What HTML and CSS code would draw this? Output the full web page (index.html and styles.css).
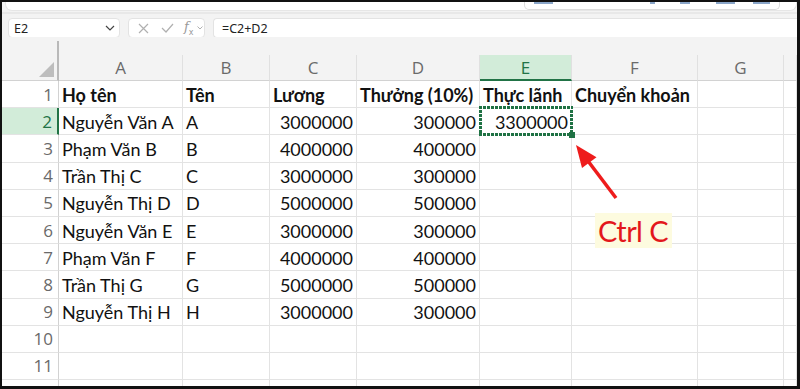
FILE: index.html
```html
<!DOCTYPE html>
<html lang="vi">
<head>
<meta charset="utf-8">
<title>Excel - Ctrl C</title>
<link rel="stylesheet" href="styles.css">
</head>
<body>
<div class="frame">
  <div class="ribbon">
    <div class="ribbon-box">
      <div class="ribbon-group">
        <span class="blue b1"></span><span class="blue b2"></span><span class="blue b3"></span><span class="blue b4"></span><span class="blue b5"></span>
      </div>
    </div>
  </div>
  <div class="fbar">
    <div class="namebox">
      <span>E2</span>
      <svg class="chev" width="10" height="6" viewBox="0 0 10 6"><path d="M1 1 L5 5 L9 1" fill="none" stroke="#444" stroke-width="1.2"/></svg>
    </div>
    <div class="fnbox">
      <svg width="11" height="11" viewBox="0 0 11 11"><path d="M1 1 L10 10 M10 1 L1 10" stroke="#b0b0b0" stroke-width="1.2"/></svg>
      <svg width="13" height="10" viewBox="0 0 13 10"><path d="M1 5 L5 9 L12 1" fill="none" stroke="#b0b0b0" stroke-width="1.2"/></svg>
      <span class="fx"><i>f</i><sub>x</sub></span>
      <svg class="mini" width="6" height="4" viewBox="0 0 6 4"><path d="M0.5 0.5 L3 3 L5.5 0.5" fill="none" stroke="#b0b0b0" stroke-width="1"/></svg>
    </div>
    <div class="formula">=C2+D2</div>
  </div>
  <div class="sheet">
    <div class="colhead">
      <div class="corner"><span class="tri"></span></div>
      <div class="ch">A</div>
      <div class="ch">B</div>
      <div class="ch">C</div>
      <div class="ch">D</div>
      <div class="ch active">E</div>
      <div class="ch">F</div>
      <div class="ch">G</div>
      <div class="ch"></div>
    </div>
    <div class="grid">
      <div class="rh">1</div><div class="c b">Họ tên</div><div class="c b">Tên</div><div class="c b">Lương</div><div class="c b">Thưởng (10%)</div><div class="c b">Thực lãnh</div><div class="c b">Chuyển khoản</div><div class="c"></div><div class="c"></div>
      <div class="rh active">2</div><div class="c">Nguyễn Văn A</div><div class="c">A</div><div class="c n">3000000</div><div class="c n">300000</div><div class="c n sel">3300000</div><div class="c"></div><div class="c"></div><div class="c"></div>
      <div class="rh">3</div><div class="c">Phạm Văn B</div><div class="c">B</div><div class="c n">4000000</div><div class="c n">400000</div><div class="c"></div><div class="c"></div><div class="c"></div><div class="c"></div>
      <div class="rh">4</div><div class="c">Trần Thị C</div><div class="c">C</div><div class="c n">3000000</div><div class="c n">300000</div><div class="c"></div><div class="c"></div><div class="c"></div><div class="c"></div>
      <div class="rh">5</div><div class="c">Nguyễn Thị D</div><div class="c">D</div><div class="c n">5000000</div><div class="c n">500000</div><div class="c"></div><div class="c"></div><div class="c"></div><div class="c"></div>
      <div class="rh">6</div><div class="c">Nguyễn Văn E</div><div class="c">E</div><div class="c n">3000000</div><div class="c n">300000</div><div class="c"></div><div class="c"></div><div class="c"></div><div class="c"></div>
      <div class="rh">7</div><div class="c">Phạm Văn F</div><div class="c">F</div><div class="c n">4000000</div><div class="c n">400000</div><div class="c"></div><div class="c"></div><div class="c"></div><div class="c"></div>
      <div class="rh">8</div><div class="c">Trần Thị G</div><div class="c">G</div><div class="c n">5000000</div><div class="c n">500000</div><div class="c"></div><div class="c"></div><div class="c"></div><div class="c"></div>
      <div class="rh">9</div><div class="c">Nguyễn Thị H</div><div class="c">H</div><div class="c n">3000000</div><div class="c n">300000</div><div class="c"></div><div class="c"></div><div class="c"></div><div class="c"></div>
      <div class="rh">10</div><div class="c"></div><div class="c"></div><div class="c"></div><div class="c"></div><div class="c"></div><div class="c"></div><div class="c"></div><div class="c"></div>
      <div class="rh">11</div><div class="c"></div><div class="c"></div><div class="c"></div><div class="c"></div><div class="c"></div><div class="c"></div><div class="c"></div><div class="c"></div>
      <div class="rh"></div><div class="c"></div><div class="c"></div><div class="c"></div><div class="c"></div><div class="c"></div><div class="c"></div><div class="c"></div><div class="c"></div>
    </div>
  </div>
  <svg class="arrow" width="800" height="389" viewBox="0 0 800 389">
    <line x1="616" y1="198" x2="588" y2="161" stroke="#ee1c1c" stroke-width="3.5"/>
    <polygon points="576,145 596.5,157.2 582,168" fill="#ee1c1c"/>
  </svg>
  <div class="note">Ctrl C</div>
</div>
</body>
</html>
```
FILE: styles.css
```css
* { box-sizing: border-box; }
html, body { margin: 0; padding: 0; background: #fff; }

.frame {
  position: relative;
  width: 800px;
  height: 389px;
  border-style: solid;
  border-color: #111;
  border-width: 2px 3px 3px 2px;
  background: #f3f3f3;
  overflow: hidden;
  display: flex;
  flex-direction: column;
  font-family: "Lato", "Open Sans", sans-serif;
}

/* ribbon remnant */
.ribbon {
  height: 10px;
  background: #f3f3f3;
  padding: 0 0 0 3px;
  flex: none;
}
.ribbon-box {
  height: 9px;
  background: #fff;
  border: 1px solid #e6e6e6;
  border-top: none;
  border-radius: 0 0 7px 7px;
  padding-left: 518px;
}
.ribbon-group {
  position: relative;
  width: 256px;
  height: 8px;
  border: 1px solid #dcdcdc;
  border-top: none;
  border-radius: 0 0 5px 5px;
}
.blue { position: absolute; top: 0; height: 2px; background: #8aa6c9; }
.b1 { left: 9px; width: 19px; }
.b2 { left: 125px; width: 5px; }
.b3 { left: 155px; width: 10px; }
.b4 { left: 191px; width: 19px; }
.b5 { left: 228px; width: 17px; }

/* formula bar */
.fbar {
  height: 25px;
  flex: none;
  display: flex;
  align-items: flex-start;
  padding: 4px 0 0 6px;
  gap: 8px;
  border-top: 2px solid #e8e8e8;
  font-family: "Noto Sans", "Open Sans", sans-serif;
  font-size: 12.5px;
  color: #222;
}
.namebox {
  width: 112px;
  height: 20px;
  background: #fff;
  border: 1px solid #e3e3e3;
  border-radius: 4px;
  display: flex;
  align-items: center;
  justify-content: space-between;
  padding: 0 4px 0 5px;
}
.fnbox {
  width: 77px;
  height: 20px;
  background: #fff;
  border: 1px solid #e3e3e3;
  border-radius: 4px;
  display: flex;
  align-items: center;
  padding: 0 0 0 9px;
}
.fnbox svg:nth-child(1) { margin-right: 12px; }
.fnbox svg:nth-child(2) { margin-right: 10px; }
.fx {
  font-family: "DejaVu Serif", "Liberation Serif", serif;
  color: #9a9a9a;
  font-size: 13px;
  line-height: 1;
}
.fx sub { font-size: 8px; font-family: "DejaVu Sans", sans-serif; font-style: normal; }
.mini { margin-left: 3px; }
.formula {
  flex: 1;
  height: 20px;
  background: #fff;
  border: 1px solid #e3e3e3;
  border-right: none;
  border-radius: 4px 0 0 4px;
  padding: 1px 0 0 8px;
  line-height: 17px;
}

/* sheet */
.sheet {
  flex: 1;
  display: flex;
  flex-direction: column;
  min-height: 0;
}
.colhead, .grid {
  display: grid;
  grid-template-columns: 57px 124px 87px 87px 123px 92px 126px 86px 1fr;
}
.colhead {
  height: 44px;
  flex: none;
  background: #f3f3f3;
}
.corner {
  margin-top: 4px;
  border-right: 2px solid #b9b9b9;
  border-bottom: 1px solid #d2d2d2;
  position: relative;
}
.tri {
  position: absolute;
  right: 3px;
  bottom: 3px;
  width: 15px;
  height: 15px;
  background: #bdbdbd;
  clip-path: polygon(100% 0, 100% 100%, 0 100%);
}
.ch {
  align-self: end;
  height: 26px;
  border-right: 1px solid #e0e0e0;
  border-bottom: 1px solid #d2d2d2;
  display: flex;
  align-items: center;
  justify-content: center;
  font-family: "Open Sans", "Noto Sans", sans-serif;
  font-size: 17px;
  color: #6a6a6a;
}
.ch.active {
  background: #d2ecd9;
  color: #217346;
  border-bottom: 2px solid #217346;
}

.grid {
  grid-auto-rows: 27.2px;
  background: #fff;
  flex: none;
}
.rh {
  border-right: 1px solid #d2d2d2;
  border-bottom: 1px solid #e3e3e3;
  display: flex;
  align-items: center;
  justify-content: flex-end;
  padding-right: 5px;
  font-family: "Open Sans", "Noto Sans", sans-serif;
  font-size: 17px;
  color: #6a6a6a;
}
.rh.active {
  background: #d2ecd9;
  color: #217346;
  border-right: 2px solid #217346;
}
.c {
  border-right: 1px solid #e3e3e3;
  border-bottom: 1px solid #e3e3e3;
  display: flex;
  align-items: center;
  padding: 1px 3px 0;
  white-space: nowrap;
  font-size: 18px;
  color: #111;
}
.c.b { font-weight: 700; }
.c.n { justify-content: flex-end; padding-right: 3px; }
.c.sel { position: relative; }
.c.sel::before {
  content: "";
  position: absolute;
  top: -2px; left: -1px; right: -2px; bottom: -2px;
  background:
    repeating-linear-gradient(90deg, #1f7244 0 3px, #ffffff 3px 4px) top left / 100% 3px no-repeat,
    repeating-linear-gradient(90deg, #1f7244 0 3px, #ffffff 3px 4px) bottom left / 100% 3px no-repeat,
    repeating-linear-gradient(180deg, #1f7244 0 3px, #ffffff 3px 4px) top left / 3px 100% no-repeat,
    repeating-linear-gradient(180deg, #1f7244 0 3px, #ffffff 3px 4px) top right / 3px 100% no-repeat;
}
.c.sel::after {
  content: "";
  position: absolute;
  right: -4px;
  bottom: -4px;
  width: 6px;
  height: 6px;
  background: #1f7244;
}

/* annotations */
.arrow {
  position: absolute;
  left: -2px;
  top: -2px;
  pointer-events: none;
}
.note {
  position: absolute;
  left: 593px;
  top: 211px;
  width: 77px;
  height: 35px;
  background: #fdfbdf;
  color: #e3171c;
  font-size: 29px;
  letter-spacing: -0.6px;
  line-height: 35px;
  padding-left: 3px;
  white-space: nowrap;
}
```
